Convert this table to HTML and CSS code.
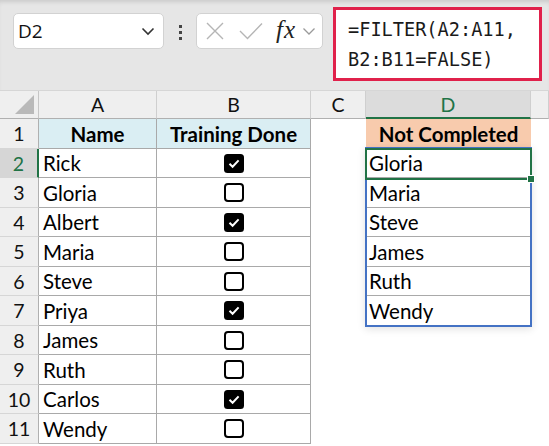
FILE: index.html
```html
<!DOCTYPE html>
<html>
<head>
<meta charset="utf-8">
<link rel="stylesheet" href="styles.css">
</head>
<body>
<div class="toolbar">
  <div class="namebox">
    <span class="nb-text">D2</span>
    <svg class="nb-chev" width="14" height="9" viewBox="0 0 14 9"><path d="M1.5 1.5L7 7L12.5 1.5" fill="none" stroke="#333" stroke-width="1.6"/></svg>
  </div>
  <div class="dots"><i></i><i></i><i></i></div>
  <div class="fxbox">
    <svg class="ic-x" width="18" height="18" viewBox="0 0 18 18"><path d="M1 1L17 17M17 1L1 17" stroke="#b5b5b5" stroke-width="1.4" fill="none"/></svg>
    <svg class="ic-ok" width="24" height="18" viewBox="0 0 24 18"><path d="M1 9L8.5 16.5L23 1.5" stroke="#b5b5b5" stroke-width="1.4" fill="none"/></svg>
    <span class="fx">fx</span>
    <svg class="fx-chev" width="14" height="9" viewBox="0 0 14 9"><path d="M1.5 1.5L7 7L12.5 1.5" fill="none" stroke="#9a9a9a" stroke-width="1.3"/></svg>
  </div>
  <div class="formula">=FILTER(A2:A11,<br>B2:B11=FALSE)</div>
</div>

<div class="sheet">
  <!-- header row -->
  <div class="corner"><svg width="19" height="19" viewBox="0 0 19 19"><path d="M19 0V19H0Z" fill="#b9b9b9"/></svg></div>
  <div class="ch">A</div>
  <div class="ch">B</div>
  <div class="ch">C</div>
  <div class="ch ch-sel">D</div>
  <div class="ch"></div>

  <!-- row 1 -->
  <div class="rh">1</div>
  <div class="c t hb">Name</div>
  <div class="c t hb">Training Done</div>
  <div class="c"></div>
  <div class="c hp">Not Completed</div>
  <div class="c"></div>

  <!-- row 2 -->
  <div class="rh rh-sel">2</div>
  <div class="c t">Rick</div>
  <div class="c t ck"><svg width="20" height="19" viewBox="0 0 20 19"><rect width="20" height="19" rx="3.5" fill="#000"/><path d="M5.5 9.8L8.6 12.8L14.6 6.4" stroke="#fff" stroke-width="2" fill="none"/></svg></div>
  <div class="c"></div>
  <div class="c d">Gloria</div>
  <div class="c"></div>

  <!-- row 3 -->
  <div class="rh">3</div>
  <div class="c t">Gloria</div>
  <div class="c t ck"><svg width="20" height="19" viewBox="0 0 20 19"><rect x="1" y="1" width="18" height="17" rx="3" fill="#fff" stroke="#000" stroke-width="2"/></svg></div>
  <div class="c"></div>
  <div class="c d">Maria</div>
  <div class="c"></div>

  <!-- row 4 -->
  <div class="rh">4</div>
  <div class="c t">Albert</div>
  <div class="c t ck"><svg width="20" height="19" viewBox="0 0 20 19"><rect width="20" height="19" rx="3.5" fill="#000"/><path d="M5.5 9.8L8.6 12.8L14.6 6.4" stroke="#fff" stroke-width="2" fill="none"/></svg></div>
  <div class="c"></div>
  <div class="c d">Steve</div>
  <div class="c"></div>

  <!-- row 5 -->
  <div class="rh">5</div>
  <div class="c t">Maria</div>
  <div class="c t ck"><svg width="20" height="19" viewBox="0 0 20 19"><rect x="1" y="1" width="18" height="17" rx="3" fill="#fff" stroke="#000" stroke-width="2"/></svg></div>
  <div class="c"></div>
  <div class="c d">James</div>
  <div class="c"></div>

  <!-- row 6 -->
  <div class="rh">6</div>
  <div class="c t">Steve</div>
  <div class="c t ck"><svg width="20" height="19" viewBox="0 0 20 19"><rect x="1" y="1" width="18" height="17" rx="3" fill="#fff" stroke="#000" stroke-width="2"/></svg></div>
  <div class="c"></div>
  <div class="c d">Ruth</div>
  <div class="c"></div>

  <!-- row 7 -->
  <div class="rh">7</div>
  <div class="c t">Priya</div>
  <div class="c t ck"><svg width="20" height="19" viewBox="0 0 20 19"><rect width="20" height="19" rx="3.5" fill="#000"/><path d="M5.5 9.8L8.6 12.8L14.6 6.4" stroke="#fff" stroke-width="2" fill="none"/></svg></div>
  <div class="c"></div>
  <div class="c d d-last">Wendy</div>
  <div class="c"></div>

  <!-- row 8 -->
  <div class="rh">8</div>
  <div class="c t">James</div>
  <div class="c t ck"><svg width="20" height="19" viewBox="0 0 20 19"><rect x="1" y="1" width="18" height="17" rx="3" fill="#fff" stroke="#000" stroke-width="2"/></svg></div>
  <div class="c"></div>
  <div class="c"></div>
  <div class="c"></div>

  <!-- row 9 -->
  <div class="rh">9</div>
  <div class="c t">Ruth</div>
  <div class="c t ck"><svg width="20" height="19" viewBox="0 0 20 19"><rect x="1" y="1" width="18" height="17" rx="3" fill="#fff" stroke="#000" stroke-width="2"/></svg></div>
  <div class="c"></div>
  <div class="c"></div>
  <div class="c"></div>

  <!-- row 10 -->
  <div class="rh">10</div>
  <div class="c t">Carlos</div>
  <div class="c t ck"><svg width="20" height="19" viewBox="0 0 20 19"><rect width="20" height="19" rx="3.5" fill="#000"/><path d="M5.5 9.8L8.6 12.8L14.6 6.4" stroke="#fff" stroke-width="2" fill="none"/></svg></div>
  <div class="c"></div>
  <div class="c"></div>
  <div class="c"></div>

  <!-- row 11 -->
  <div class="rh">11</div>
  <div class="c t">Wendy</div>
  <div class="c t ck"><svg width="20" height="19" viewBox="0 0 20 19"><rect x="1" y="1" width="18" height="17" rx="3" fill="#fff" stroke="#000" stroke-width="2"/></svg></div>
  <div class="c"></div>
  <div class="c"></div>
  <div class="c"></div>

  <div class="spill"></div>
  <div class="selection"><i class="handle"></i></div>
</div>
</body>
</html>
```

FILE: styles.css
```css
* { box-sizing: border-box; }
html, body { margin: 0; padding: 0; background: #fff; }
body { width: 549px; height: 446px; overflow: hidden; font-family: Lato, "Liberation Sans", sans-serif; }

.toolbar {
  height: 91px;
  background: #e6e6e6;
  box-shadow: inset 0 4px 4px -2px rgba(0,0,0,0.12);
  display: flex;
  align-items: flex-start;
  padding-left: 13px;
  border-bottom: 1px solid #d6d6d6;
}
.namebox {
  margin-top: 13px;
  width: 151px;
  height: 36px;
  background: #fff;
  border: 1px solid #d2d2d2;
  border-radius: 5px;
  display: flex;
  align-items: center;
  justify-content: space-between;
  padding: 0 8px 0 4px;
}
.nb-text { font-family: "Open Sans", "Liberation Sans", sans-serif; font-size: 19px; color: #111; }
.dots {
  margin: 25px 0 0 0;
  width: 32px;
  display: flex;
  flex-direction: column;
  align-items: center;
  gap: 3px;
}
.dots i { display: block; width: 3px; height: 3px; background: #444; }
.fxbox {
  margin-top: 13px;
  width: 127px;
  height: 36px;
  background: #fff;
  border: 1px solid #d2d2d2;
  border-radius: 5px;
  display: flex;
  align-items: center;
  padding-left: 9px;
}
.ic-x { margin-right: 15px; }
.ic-ok { margin-right: 13px; }
.fx { font-family: "Liberation Serif", serif; font-style: italic; font-size: 25px; color: #222; margin-right: 6px; line-height: 1; margin-top: -3px; letter-spacing: 1px; }
.formula {
  margin: 7px 0 0 10px;
  width: 209px;
  height: 74px;
  background: #fff;
  border: 3px solid #e0214b;
  font-family: "DejaVu Sans Mono", monospace;
  font-size: 18.6px;
  line-height: 30px;
  color: #1a1a1a;
  padding: 5px 0 0 12px;
  white-space: nowrap;
}

.sheet {
  position: relative;
  display: grid;
  grid-template-columns: 39px 118px 154px 55px 165px 1fr;
  grid-template-rows: 28px 30px 29px 30px 29px 30px 29px 30px 29px 30px 29px 30px;
  font-size: 20.5px;
  color: #000;
}
.corner {
  background: #efefef;
  border-right: 1px solid #c6c6c6;
  border-bottom: 1px solid #b0b0b0;
  display: flex;
  align-items: flex-end;
  justify-content: flex-end;
  padding: 0 4px 4px 0;
}
.ch {
  background: #efefef;
  border-right: 1px solid #cfcfcf;
  border-bottom: 1px solid #b0b0b0;
  display: flex;
  align-items: center;
  justify-content: center;
  font-size: 19.5px;
  color: #111;
}
.ch-sel {
  background: #dcdcdc;
  color: #217346;
  border-bottom: 2px solid #217346;
}
.rh {
  background: #efefef;
  border-right: 1px solid #b0b0b0;
  border-bottom: 1px solid #d6d6d6;
  display: flex;
  align-items: center;
  justify-content: center;
  font-size: 19.5px;
  color: #111;
}
.rh-sel {
  background: #d6d6d6;
  color: #217346;
  border-right: 2px solid #217346;
}
.c {
  display: flex;
  align-items: center;
  padding-left: 4px;
  white-space: nowrap;
}
.t {
  border-right: 1px solid #a9a9a9;
  border-bottom: 1px solid #a9a9a9;
}
.hb {
  background: #daeef3;
  font-weight: 700;
  justify-content: center;
  padding-left: 0;
}
.hp {
  background: #f8cbad;
  font-weight: 700;
  justify-content: center;
  padding-left: 0;
}
.ck { justify-content: center; padding-left: 0; }
.d { border-bottom: 1px solid #a9a9a9; padding-left: 3px; }
.d-last { border-bottom: none; }

.spill {
  position: absolute;
  left: 365px;
  top: 56px;
  width: 167px;
  height: 180px;
  border: 2px solid #4472c4;
  box-shadow: 0 2px 8px rgba(0,0,0,0.12);
  pointer-events: none;
}
.selection {
  position: absolute;
  left: 365px;
  top: 57px;
  width: 167px;
  height: 32px;
  border: 2px solid #217346;
  pointer-events: none;
}
.handle {
  position: absolute;
  right: -5px;
  bottom: -5px;
  width: 8px;
  height: 8px;
  background: #217346;
  border: 1px solid #fff;
}
```
